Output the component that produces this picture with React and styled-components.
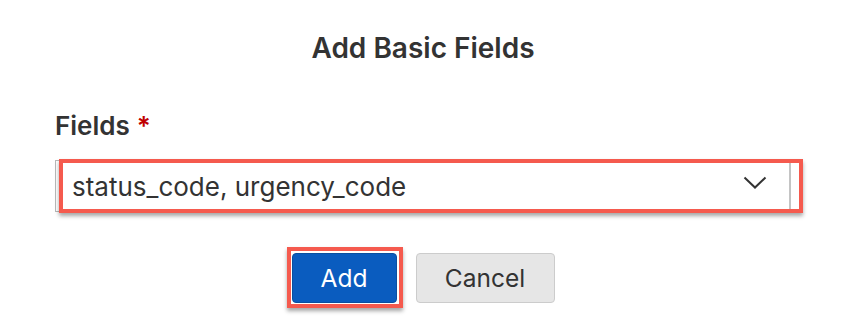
import React from 'react';
import styled, { createGlobalStyle } from 'styled-components';

const GlobalStyle = createGlobalStyle`
  html, body {
    margin: 0;
    padding: 0;
    background: #ffffff;
  }
  body {
    font-family: Inter, "Liberation Sans", Arial, sans-serif;
    color: #333333;
  }
`;

const Dialog = styled.div`
  width: 868px;
  height: 333px;
  box-sizing: border-box;
  padding: 30px 0 0 55px;
  display: flex;
  flex-direction: column;
`;

const Title = styled.h2`
  margin: 0 77px 0 0;
  text-align: center;
  font-size: 28px;
  font-weight: 600;
  color: #333;
  line-height: 36px;
`;

const Label = styled.label`
  margin-top: 44px;
  font-size: 26px;
  font-weight: 600;
  line-height: 32px;
  color: #333;
`;

const Required = styled.span`
  color: #c00000;
  margin-left: 7px;
`;

const Marked = styled.div`
  position: relative;
  width: ${p => p.$width}px;
  &::after {
    content: '';
    position: absolute;
    left: ${p => p.$left}px;
    right: ${p => p.$right}px;
    top: ${p => p.$top}px;
    bottom: ${p => p.$bottom}px;
    border: 4px solid #f55a4e;
    box-shadow: 0 3px 4px rgba(0, 0, 0, 0.35);
    pointer-events: none;
  }
`;

const SelectBox = styled.div`
  margin-top: 18px;
  height: 52px;
  box-sizing: border-box;
  border: 1px solid #b8b8b8;
  border-right: 2px solid #c4c4c4;
  background: #fff;
  display: flex;
  align-items: center;
  justify-content: space-between;
  padding: 0 22px 0 16px;
  font-size: 26px;
  color: #333;
`;

const Chevron = styled.svg`
  width: 24px;
  height: 14px;
  margin-top: -6px;
`;

const Actions = styled.div`
  display: flex;
  justify-content: center;
  gap: 19px;
  margin-top: 41px;
  margin-right: 77px;
`;

const Button = styled.button`
  height: 50px;
  box-sizing: border-box;
  border-radius: 4px;
  font-family: inherit;
  font-size: 24.5px;
  padding: 0;
  width: ${p => p.$width}px;
  background: ${p => (p.$primary ? '#0a5cbf' : '#e6e6e6')};
  color: ${p => (p.$primary ? '#ffffff' : '#333333')};
  border: 1px solid ${p => (p.$primary ? '#0a4f9f' : '#cccccc')};
`;

export default function App() {
  return (
    <>
      <GlobalStyle />
      <Dialog>
        <Title>Add Basic Fields</Title>
        <Label>
          Fields<Required>*</Required>
        </Label>
        <Marked $width={736} $left={4} $right={-12} $top={17} $bottom={-1}>
          <SelectBox>
            <span>status_code, urgency_code</span>
            <Chevron viewBox="0 0 24 14" fill="none">
              <path d="M1.5 1.5 L12 11.5 L22.5 1.5" stroke="#333" strokeWidth="2" />
            </Chevron>
          </SelectBox>
        </Marked>
        <Actions>
          <Marked $width={105} $left={-5} $right={-6} $top={-6} $bottom={-5}>
            <Button $primary $width={105}>Add</Button>
          </Marked>
          <Button $width={139}>Cancel</Button>
        </Actions>
      </Dialog>
    </>
  );
}
